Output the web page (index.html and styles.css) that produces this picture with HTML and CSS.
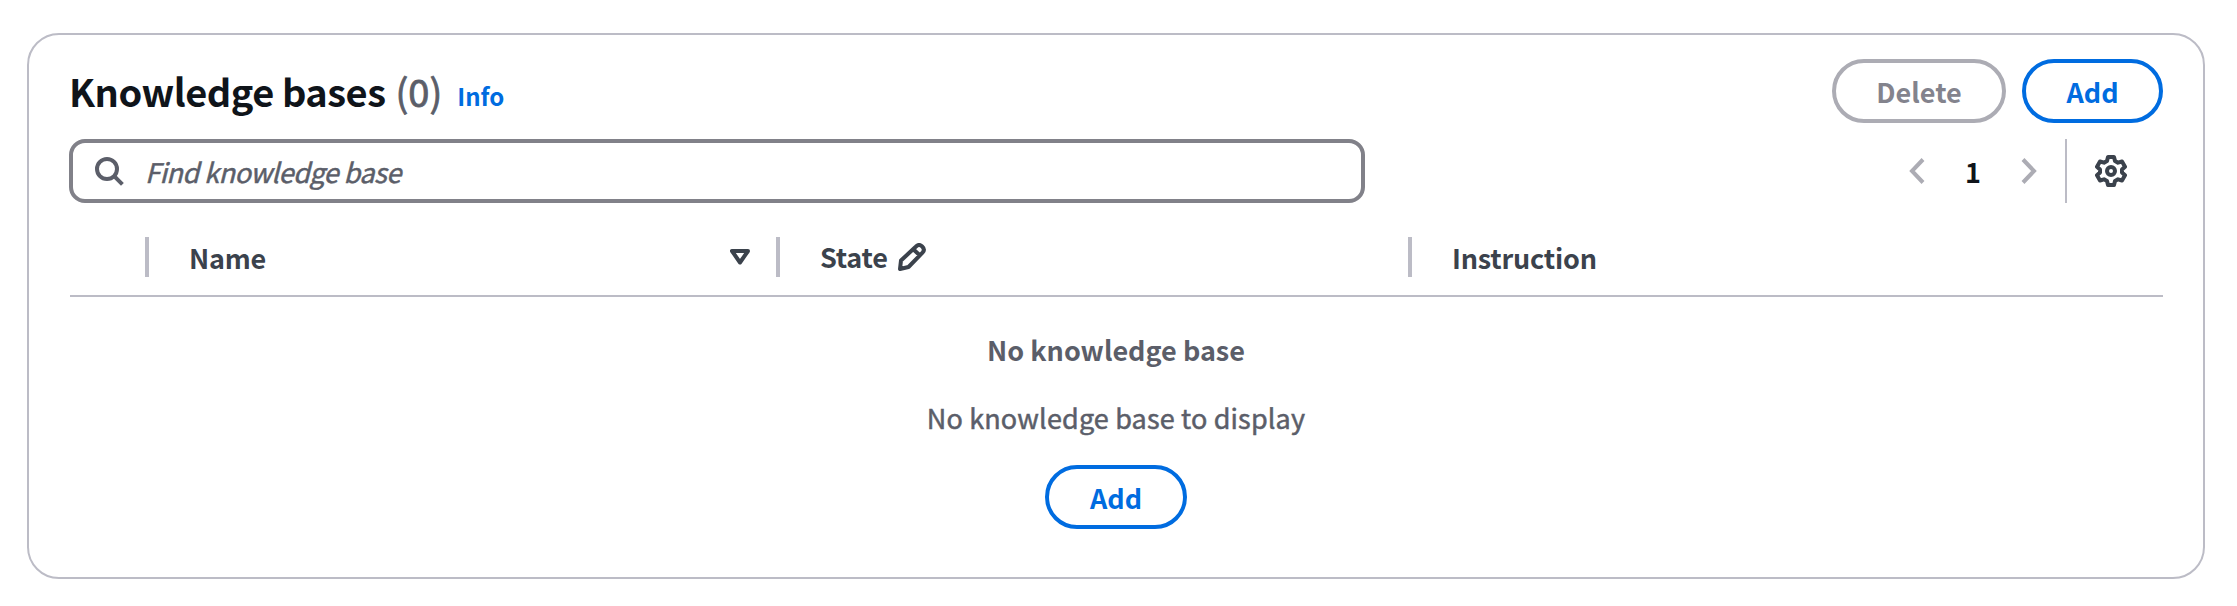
FILE: index.html
```html
<!DOCTYPE html>
<html lang="en">
<head>
<meta charset="utf-8">
<title>Knowledge bases</title>
<link rel="stylesheet" href="styles.css">
</head>
<body>
<main class="card">
  <header class="header">
    <h1 class="title">Knowledge bases</h1>
    <span class="counter">(0)</span>
    <a class="info">Info</a>
    <div class="actions">
      <button class="button button-delete" disabled><span class="button-label">Delete</span></button>
      <button class="button button-add"><span class="button-label">Add</span></button>
    </div>
  </header>
  <div class="tools">
    <div class="search">
      <svg class="search-icon" width="32" height="32" viewBox="0 0 16 16"><circle cx="7" cy="7" r="5"/><path d="m10.600 10.600 4.100 4.100"/></svg>
      <span class="placeholder">Find knowledge base</span>
    </div>
    <nav class="pager">
      <svg class="chevron" width="16" height="28" viewBox="0 0 16 28"><path d="M14 2.500 3 14l11 11.500"/></svg>
      <span class="page">1</span>
      <svg class="chevron" width="16" height="28" viewBox="0 0 16 28"><path d="m2 2.500 11 11.500L2 25.500"/></svg>
    </nav>
    <div class="settings">
      <svg class="gear" width="32" height="32" viewBox="0 0 32 32"><path d="M13 2h6l1 4 3 1.700 4-1.200 3 5.200-3 2.800v3l3 2.800-3 5.200-4-1.200-3 1.700-1 4h-6l-1-4-3-1.700-4 1.200-3-5.200 3-2.800v-3l-3-2.800 3-5.200 4 1.200L12 6z"/><circle cx="16" cy="16" r="4"/></svg>
    </div>
  </div>
  <div class="columns">
    <div class="column"></div>
    <div class="column"><span class="label">Name</span><svg class="sort" width="20" height="16" viewBox="0 0 20 16"><path d="M2 2h16l-8 11.500z"/></svg></div>
    <div class="column"><span class="label label-editable">State</span><svg class="pencil" width="28" height="28" viewBox="0 0 28 28"><path d="M2 26l1-8.500L18 3.500q3-3 6.200 0t.3 6.200L10.500 24zM15.500 6.500l6.500 6"/></svg></div>
    <div class="column"><span class="label">Instruction</span></div>
  </div>
  <section class="empty">
    <strong class="empty-title">No knowledge base</strong>
    <p class="empty-text">No knowledge base to display</p>
    <button class="button button-add"><span class="button-label">Add</span></button>
  </section>
</main>
</body>
</html>
```
FILE: styles.css
```css
* { box-sizing: border-box; }
body {
  margin: 0;
  padding: 33px 32px 27px 27px;
  background: #fff;
  color: #3b424c;
  font: 27px/40px "Noto Sans CJK SC", "Noto Sans", sans-serif;
  white-space: nowrap;
}
.card {
  height: 546px;
  padding: 24px 40px 0;
  border: 2px solid #bcbcc6;
  border-radius: 32px;
}
.header { display: flex; height: 64px; align-items: center; }
.title { margin: 0; color: #0f141a; font-size: 38px; font-weight: 700; letter-spacing: -.5px; }
.counter { margin-left: 10px; color: #5b5e69; font-size: 38px; -webkit-text-stroke: .8px; }
.info { margin: 10px 0 0 15px; color: #006ce0; font-size: 24px; font-weight: 700; }
.actions { display: flex; gap: 16px; margin-left: auto; }
.button {
  display: flex;
  justify-content: center;
  align-items: center;
  height: 64px;
  padding: 0;
  border: 4px solid #006ce0;
  border-radius: 40px;
  background: #fff;
  color: #006ce0;
  font: inherit;
  font-weight: 700;
}
.button-label { padding-top: 1px; }
.button-add { width: 141px; }
.empty .button-add { width: 142px; }
.button-delete { width: 174px; border-color: #acacb4; color: #83838d; }
.tools { display: flex; height: 64px; margin-top: 16px; }
.search {
  display: flex;
  align-items: center;
  width: 1296px;
  height: 64px;
  padding-left: 20px;
  border: 4px solid #818189;
  border-radius: 16px;
}
.search-icon, .chevron, .gear, .sort, .pencil { flex: none; fill: none; stroke: currentColor; }
.search-icon { color: #5b5e69; stroke-width: 2; }
.placeholder { margin-left: 20px; padding-top: 2px; color: #5b5e69; font-style: italic; letter-spacing: -.5px; -webkit-text-stroke: .5px; }
.pager { display: flex; align-items: center; width: 128px; margin-left: auto; justify-content: space-between; }
.chevron { color: #acacb4; stroke-width: 4; }
.page { padding-top: 1px; color: #0f141a; font-weight: 700; }
.settings { display: flex; align-items: center; width: 98px; margin-left: 28px; padding-left: 28px; border-left: 2px solid #bcbcc6; }
.gear { stroke-width: 4; stroke-linejoin: round; }
.columns {
  display: grid;
  grid-template-columns: 79px 631px 632px 1fr;
  height: 94px;
  margin-left: 1px;
  padding-top: 34px;
  border-bottom: 2px solid #bcbcc6;
  font-weight: 700;
}
.column { display: flex; align-items: center; height: 40px; padding: 0 26px 0 40px; border-right: 4px solid #bcbcc6; }
.column:last-child { border: 0; }
.label { padding-top: 2px; letter-spacing: -.2px; }
.label-editable { padding: 0; }
.sort { margin-left: auto; stroke-width: 4; stroke-linejoin: round; }
.pencil { margin-left: 10px; stroke-width: 4; stroke-linejoin: round; }
.empty { display: flex; flex-direction: column; align-items: center; padding-top: 33px; color: #5b5e69; }
.empty-text { margin: 28px 0 27px; letter-spacing: .15px; -webkit-text-stroke: .5px; }
```
